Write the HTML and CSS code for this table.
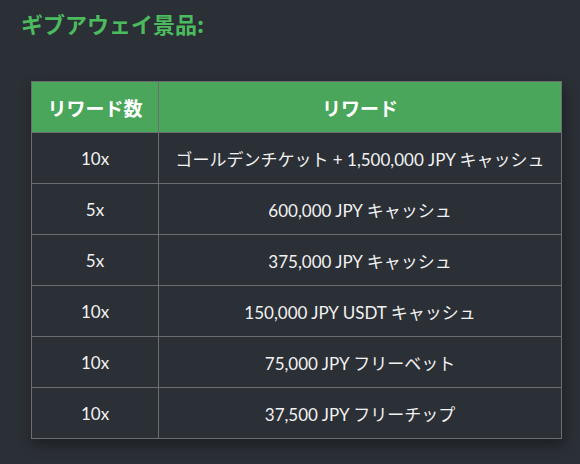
FILE: index.html
```html
<!DOCTYPE html>
<html lang="ja">
<head>
<meta charset="utf-8">
<link rel="stylesheet" href="styles.css">
</head>
<body>
<div class="page">
  <h2 class="title">ギブアウェイ景品:</h2>
  <table class="rewards">
    <thead>
      <tr><th class="col-count">リワード数</th><th>リワード</th></tr>
    </thead>
    <tbody>
      <tr><td>10x</td><td>ゴールデンチケット + 1,500,000 JPY キャッシュ</td></tr>
      <tr><td>5x</td><td>600,000 JPY キャッシュ</td></tr>
      <tr><td>5x</td><td>375,000 JPY キャッシュ</td></tr>
      <tr><td>10x</td><td>150,000 JPY USDT キャッシュ</td></tr>
      <tr><td>10x</td><td>75,000 JPY フリーベット</td></tr>
      <tr><td>10x</td><td>37,500 JPY フリーチップ</td></tr>
    </tbody>
  </table>
</div>
</body>
</html>
```
FILE: styles.css
```css
html, body {
  margin: 0;
  padding: 0;
  background: #2b2f36;
}
.page {
  width: 580px;
  height: 464px;
  padding: 8px 0 0 21px;
  box-sizing: border-box;
  font-family: "Lato", "Noto Sans CJK JP", sans-serif;
  color: #ffffff;
}
.title {
  margin: 0;
  font-family: "Noto Sans CJK JP", sans-serif;
  font-size: 22px;
  font-weight: 700;
  line-height: 30px;
  color: #4cbb5e;
}
.rewards {
  margin: 43px 0 0 10px;
  width: 531px;
  border-collapse: collapse;
  box-shadow: 2px 6px 12px rgba(0, 0, 0, 0.35);
}
.rewards th,
.rewards td {
  border: 1px solid #6b6d70;
  text-align: center;
  padding: 0;
  height: 50px;
}
.rewards th {
  background: #4aa65b;
  font-family: "Noto Sans CJK JP", sans-serif;
  font-size: 19px;
  font-weight: 700;
}
.rewards .col-count {
  width: 126px;
}
.rewards td {
  font-size: 17px;
  font-weight: 400;
  color: #f2f2f2;
}
```
